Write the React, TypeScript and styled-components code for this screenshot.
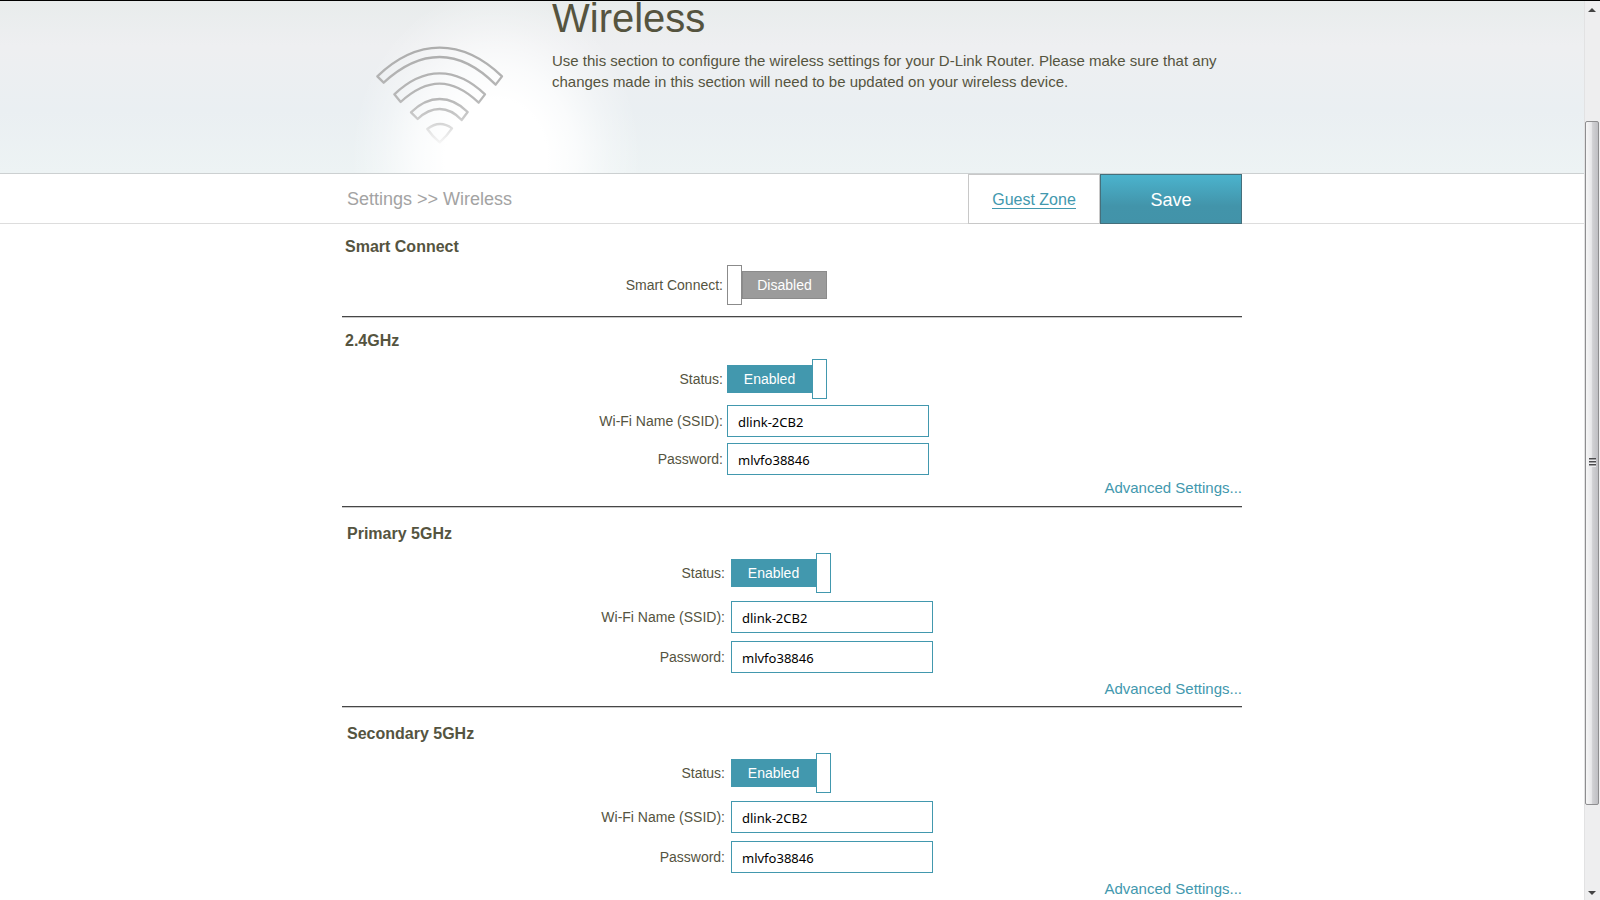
import React, { useId, useState } from "react";
import styled, { createGlobalStyle } from "styled-components";

const teal = "#4298ae";
const olive = "#55543f";

const GlobalStyle = createGlobalStyle`
  * { box-sizing: border-box; }
  body {
    margin: 0;
    background: #fff;
    color: ${olive};
    font-family: "Liberation Sans", Arial, Helvetica, sans-serif;
    font-size: 14px;
    line-height: 20px;
  }
`;

const Window = styled.div`
  display: flex;
  height: 100vh;
  border-top: 1px solid #000;
  overflow: hidden;
`;

const Page = styled.main`
  flex: 1;
  min-width: 0;
`;

const Column = styled.div`
  width: 100%;
  max-width: 900px;
  margin: 0 auto;
`;

const Hero = styled.header`
  background: linear-gradient(#e8ecec 0, #eeeff1 45px, #eaeff2 110px, #edf3f4 172px);
  border-bottom: 1px solid #ccd0d1;
`;

const HeroInner = styled(Column)`
  display: flex;
  align-items: flex-start;
  height: 172px;
  padding-left: 32px;
  background: radial-gradient(
    ellipse 145px 170px at 154px 158px,
    #fff 0,
    #fff 35%,
    rgba(255, 255, 255, 0.75) 55%,
    rgba(255, 255, 255, 0.3) 78%,
    rgba(255, 255, 255, 0) 100%
  );
`;

const WifiArt = styled.svg`
  flex: none;
  width: 132px;
  height: 102px;
  margin: 42px 46px 0 0;
`;

const Title = styled.h1`
  margin: 0 0 15px;
  font-size: 40px;
  font-weight: 400;
  line-height: 34px;
`;

const Intro = styled.p`
  margin: 0;
  max-width: 680px;
  font-size: 15px;
  line-height: 21px;
`;

const Toolbar = styled.nav`
  box-shadow: inset 0 -1px #dddddd;
`;

const ToolbarInner = styled(Column)`
  display: flex;
  align-items: stretch;
  height: 50px;
`;

const Crumbs = styled.div`
  flex: 1;
  padding-left: 5px;
  color: #a3a3a3;
  font-size: 18px;
  line-height: 50px;
`;

const GuestBox = styled.div`
  width: 132px;
  border: 1px solid #c8c8c8;
  text-align: center;
  font-size: 16px;
  line-height: 50px;
`;

const TextLink = styled.a<{ $underlined?: boolean }>`
  color: ${teal};
  text-decoration: none;
  border-bottom: ${(p) => (p.$underlined ? `1px solid ${teal}` : "0")};
`;

const SaveButton = styled.button`
  width: 142px;
  padding: 2px 0 0;
  border: 1px solid #456f7b;
  background: linear-gradient(#4bb3cd, #4294aa 65%, #4293a9);
  color: #fff;
  font: inherit;
  font-size: 18px;
`;

const Panel = styled.section<{ $roomy?: boolean }>`
  padding: ${(p) => (p.$roomy ? "16px 0 7px" : "13px 0 8px")};
  border-bottom: 1px solid #464646;
  box-shadow: 0 1px #c9c9c9;
  margin-bottom: 1px;
`;

const Heading = styled.h2<{ $roomy?: boolean }>`
  margin: 0 0 ${(p) => (p.$roomy ? 9 : 8)}px;
  padding-left: ${(p) => (p.$roomy ? 5 : 3)}px;
  font-size: 16px;
  line-height: 20px;
`;

const Fields = styled.div<{ $roomy?: boolean }>`
  display: grid;
  grid-template-columns: ${(p) => (p.$roomy ? 383 : 381)}px 1fr;
  column-gap: ${(p) => (p.$roomy ? 6 : 4)}px;
  row-gap: ${(p) => (p.$roomy ? 8 : 6)}px;
  align-items: center;
  margin-bottom: 3px;
`;

const FieldLabel = styled.label`
  text-align: right;
`;

const TextField = styled.input`
  width: 202px;
  height: 32px;
  padding: 2px 10px 0;
  border: 1px solid ${teal};
  background: #fff;
  color: #000;
  font-family: "Noto Sans", "Open Sans", sans-serif;
  font-size: 13px;
  outline: 0;
`;

const Switch = styled.span<{ $on: boolean }>`
  position: relative;
  display: flex;
  flex-direction: ${(p) => (p.$on ? "row" : "row-reverse")};
  align-items: center;
  width: 100px;
  height: 40px;
`;

const SwitchInput = styled.input`
  position: absolute;
  inset: 0;
  width: 100%;
  height: 100%;
  margin: 0;
  opacity: 0;
`;

const SwitchText = styled.span<{ $on: boolean }>`
  flex: 1;
  height: 28px;
  border: 1px solid ${(p) => (p.$on ? teal : "#8b8b8b")};
  background: ${(p) => (p.$on ? teal : "#9b9b9b")};
  color: #fff;
  text-align: center;
  line-height: 26px;
`;

const SwitchKnob = styled.span<{ $on: boolean }>`
  width: 15px;
  height: 40px;
  border: 1px solid ${(p) => (p.$on ? teal : "#8b8b8b")};
  background: #fff;
`;

const Advanced = styled.div<{ $roomy?: boolean }>`
  padding-top: ${(p) => (p.$roomy ? 3 : 0)}px;
  text-align: right;
  font-size: 15px;
`;

const ScrollBar = styled.div`
  display: flex;
  flex-direction: column;
  width: 16px;
  padding-right: 1px;
  background: #eeeeef;
  border-left: 1px solid #e2e2e3;
`;

const ScrollArrow = styled.svg`
  flex: none;
  width: 14px;
  height: 18px;
`;

const ScrollSpace = styled.div<{ $grow: number }>`
  flex: ${(p) => p.$grow} 1 0;
`;

const ScrollThumb = styled.div`
  display: flex;
  align-items: center;
  justify-content: center;
  flex: 684 1 0;
  border: 1px solid #8e8e90;
  border-radius: 2px;
  background: linear-gradient(90deg, #f6f6f6, #e8e8ea 45%, #d0d0d3 55%, #bfbfc3);
`;

const ScrollGrip = styled.div`
  width: 7px;
  height: 9px;
  background: repeating-linear-gradient(#4c4c4e 0 1px, #a0a0a2 1px 2px, #ececee 2px 3px);
`;

function WifiDrawing() {
  return (
    <WifiArt viewBox="102 129 396 306" fill="none" aria-hidden="true">
      <defs>
        <linearGradient id="fade" gradientUnits="userSpaceOnUse" x1="0" y1="140" x2="0" y2="430">
          <stop offset="0" stopColor="#adadad" />
          <stop offset="0.55" stopColor="#b8b8b8" />
          <stop offset="0.75" stopColor="#cccccc" />
          <stop offset="0.86" stopColor="#e2e2e2" />
          <stop offset="1" stopColor="#f6f6f6" />
        </linearGradient>
      </defs>
      <g stroke="url(#fade)" strokeWidth="7" strokeLinejoin="round">
        <path d="M112 229Q202 143 299 143Q396 143 486 229L467 254Q384 171 299 171Q214 171 131 248Z" />
        <path d="M163 283Q229 220 299 220Q369 220 435 283L416 308Q356 251 299 251Q242 251 182 306Z" />
        <path d="M213 337Q254 297 299 297Q344 297 383 336L365 360Q334 327 299 327Q264 327 233 357Z" />
        <path d="M262 387Q299 358 336 385Q322 406 299 427Q276 408 262 387Z" />
      </g>
    </WifiArt>
  );
}

function SwitchRow({ label, initial }: { label: string; initial: boolean }) {
  const id = useId();
  const [on, setOn] = useState(initial);
  return (
    <>
      <FieldLabel htmlFor={id}>{label}</FieldLabel>
      <Switch $on={on}>
        <SwitchText $on={on}>{on ? "Enabled" : "Disabled"}</SwitchText>
        <SwitchKnob $on={on} />
        <SwitchInput id={id} type="checkbox" checked={on} onChange={(e) => setOn(e.target.checked)} />
      </Switch>
    </>
  );
}

function TextRow({ label, value }: { label: string; value: string }) {
  const id = useId();
  return (
    <>
      <FieldLabel htmlFor={id}>{label}</FieldLabel>
      <TextField id={id} type="text" defaultValue={value} spellCheck={false} />
    </>
  );
}

function Band({ name, roomy }: { name: string; roomy?: boolean }) {
  return (
    <Panel $roomy={roomy}>
      <Heading $roomy={roomy}>{name}</Heading>
      <Fields $roomy={roomy}>
        <SwitchRow label="Status:" initial />
        <TextRow label="Wi-Fi Name (SSID):" value="dlink-2CB2" />
        <TextRow label="Password:" value="mlvfo38846" />
      </Fields>
      <Advanced $roomy={roomy}>
        <TextLink href="#advanced">Advanced Settings...</TextLink>
      </Advanced>
    </Panel>
  );
}

export default function App() {
  return (
    <>
      <GlobalStyle />
      <Window>
        <Page>
          <Hero>
            <HeroInner>
              <WifiDrawing />
              <div>
                <Title>Wireless</Title>
                <Intro>
                  Use this section to configure the wireless settings for your D-Link Router. Please make sure that any
                  changes made in this section will need to be updated on your wireless device.
                </Intro>
              </div>
            </HeroInner>
          </Hero>
          <Toolbar>
            <ToolbarInner>
              <Crumbs>Settings &gt;&gt; Wireless</Crumbs>
              <GuestBox>
                <TextLink href="#guest" $underlined>
                  Guest Zone
                </TextLink>
              </GuestBox>
              <SaveButton type="button">Save</SaveButton>
            </ToolbarInner>
          </Toolbar>
          <Column>
            <Panel>
              <Heading>Smart Connect</Heading>
              <Fields>
                <SwitchRow label="Smart Connect:" initial={false} />
              </Fields>
            </Panel>
            <Band name="2.4GHz" />
            <Band name="Primary 5GHz" roomy />
            <Band name="Secondary 5GHz" roomy />
          </Column>
        </Page>
        <ScrollBar aria-hidden="true">
          <ScrollArrow viewBox="0 0 14 18">
            <path d="M3 11L7 7L11 11Z" fill="#444" />
          </ScrollArrow>
          <ScrollSpace $grow={102} />
          <ScrollThumb>
            <ScrollGrip />
          </ScrollThumb>
          <ScrollSpace $grow={77} />
          <ScrollArrow viewBox="0 0 14 18">
            <path d="M3 9L7 13L11 9Z" fill="#444" />
          </ScrollArrow>
        </ScrollBar>
      </Window>
    </>
  );
}
